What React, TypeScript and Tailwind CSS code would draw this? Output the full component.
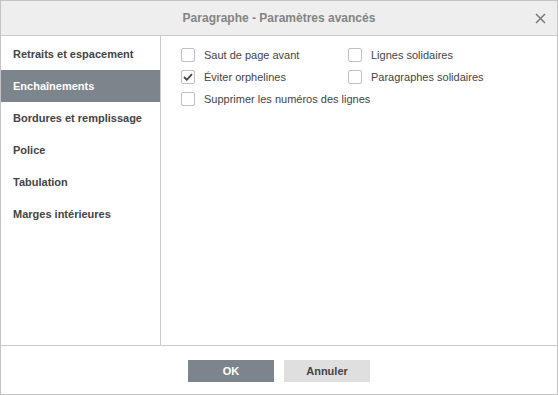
const tabs = [
  "Retraits et espacement",
  "Enchaînements",
  "Bordures et remplissage",
  "Police",
  "Tabulation",
  "Marges intérieures",
];

function Check({ label, checked }: { label: string; checked?: boolean }) {
  return (
    <label className="flex items-center h-[22px] gap-[9px]">
      <span className="w-[14px] h-[14px] border border-[#c0c0c0] rounded-[2px] bg-white flex items-center justify-center">
        {checked && (
          <svg width="10" height="8" viewBox="0 0 10 8">
            <path d="M1 4 L3.8 6.8 L9 1.2" stroke="#444" strokeWidth="1.8" fill="none" />
          </svg>
        )}
      </span>
      <span className="text-[11px] text-[#444]">{label}</span>
    </label>
  );
}

export default function App() {
  return (
    <div
      className="w-[558px] h-[395px] border border-[#c4c4c4] bg-white flex flex-col"
      style={{ fontFamily: '"Liberation Sans", Arial, sans-serif' }}
    >
      {/* header */}
      <div className="h-[35px] shrink-0 bg-[#eeeeee] border-b border-[#cbcbcb] flex items-center justify-center relative">
        <span className="text-[12px] font-bold text-[#848484]">Paragraphe - Paramètres avancés</span>
        <svg className="absolute right-[11px] top-[12px]" width="11" height="11" viewBox="0 0 11 11">
          <path d="M1 1 L10 10 M10 1 L1 10" stroke="#7a7a7a" strokeWidth="1.5" />
        </svg>
      </div>

      {/* body */}
      <div className="h-[310px] shrink-0 flex border-b border-[#cbcbcb]">
        <div className="w-[160px] shrink-0 border-r border-[#cbcbcb] pt-[2px]">
          {tabs.map((t) => (
            <div
              key={t}
              className={
                t === "Enchaînements"
                  ? "h-[32px] flex items-center pl-[12px] text-[11px] font-bold text-white bg-[#7d858c]"
                  : "h-[32px] flex items-center pl-[12px] text-[11px] font-bold text-[#444]"
              }
            >
              {t}
            </div>
          ))}
        </div>
        <div className="flex-1 pl-[20px] pt-[8px]">
          <div className="flex">
            <div className="w-[167px]">
              <Check label="Saut de page avant" />
              <Check label="Éviter orphelines" checked />
            </div>
            <div>
              <Check label="Lignes solidaires" />
              <Check label="Paragraphes solidaires" />
            </div>
          </div>
          <Check label="Supprimer les numéros des lignes" />
        </div>
      </div>

      {/* footer */}
      <div className="flex-1 flex justify-center pt-[14px] gap-[10px]">
        <button className="w-[86px] h-[22px] bg-[#7d858c] text-white text-[11px] font-bold">OK</button>
        <button className="w-[86px] h-[22px] bg-[#dfdfdf] text-[#444] text-[11px] font-bold">Annuler</button>
      </div>
    </div>
  );
}
